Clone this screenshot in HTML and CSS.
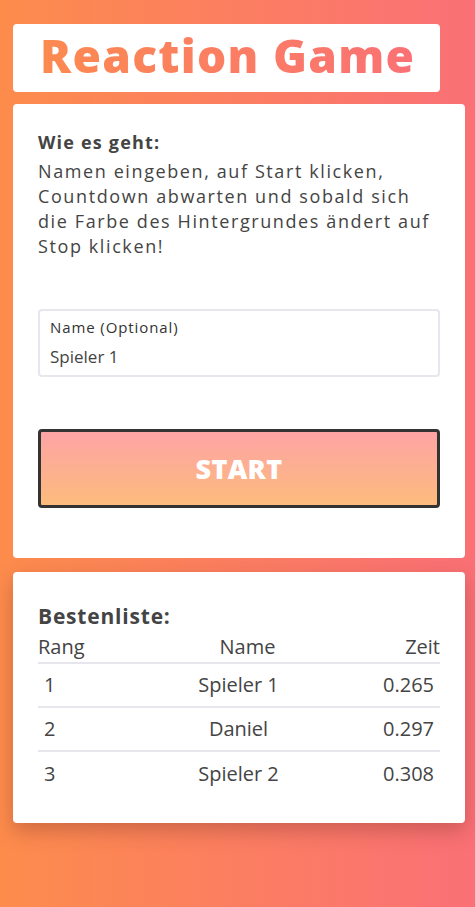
FILE: index.html
```html
<!DOCTYPE html>
<html lang="de">
<head>
<meta charset="utf-8">
<title>Reaction Game</title>
<link rel="stylesheet" href="styles.css">
</head>
<body>
<main class="page">
  <header class="title-box">
    <h1 class="title">Reaction Game</h1>
  </header>

  <section class="card game">
    <p class="how-title">Wie es geht:</p>
    <p class="how-text">Namen eingeben, auf Start klicken,<br>Countdown abwarten und sobald sich<br>die Farbe des Hintergrundes ändert auf<br>Stop klicken!</p>

    <label class="field">
      <span class="field-label">Name (Optional)</span>
      <span class="field-value">Spieler 1</span>
    </label>

    <button class="start-btn" type="button">START</button>
  </section>

  <section class="card board">
    <h2 class="board-title">Bestenliste:</h2>
    <table class="scores">
      <thead>
        <tr><th class="c-rank">Rang</th><th class="c-name">Name</th><th class="c-time">Zeit</th></tr>
      </thead>
      <tbody>
        <tr><td class="c-rank">1</td><td class="c-name">Spieler 1</td><td class="c-time">0.265</td></tr>
        <tr><td class="c-rank">2</td><td class="c-name">Daniel</td><td class="c-time">0.297</td></tr>
        <tr><td class="c-rank">3</td><td class="c-name">Spieler 2</td><td class="c-time">0.308</td></tr>
      </tbody>
    </table>
  </section>
</main>
</body>
</html>
```

FILE: styles.css
```css
* { box-sizing: border-box; }

html, body {
  margin: 0;
  height: 100%;
}

body {
  background: linear-gradient(to right, #fd8c4c, #fa7076);
  font-family: "Open Sans", "DejaVu Sans", sans-serif;
  color: #444;
}

.page {
  display: flex;
  flex-direction: column;
  align-items: flex-start;
  padding: 24px 10px 40px 13px;
}

.title-box {
  background: #fff;
  border-radius: 4px;
  height: 68px;
  padding: 0 25px 6px 27px;
  display: flex;
  align-items: center;
}

.title {
  margin: 0;
  font-size: 46px;
  font-weight: 800;
  letter-spacing: 1.3px;
  line-height: 1;
  background: linear-gradient(to right, #fc8a50, #fa7175);
  -webkit-background-clip: text;
  background-clip: text;
  color: transparent;
}

.card {
  align-self: stretch;
  background: #fff;
  border-radius: 4px;
  padding: 25px;
}

.game {
  margin-top: 12px;
  height: 454px;
  padding-top: 23px;
}

.how-title {
  margin: 0 0 2px;
  font-size: 18px;
  font-weight: 700;
  letter-spacing: 1.2px;
  line-height: 30px;
  color: #444;
}

.how-text {
  margin: 0;
  font-size: 18px;
  letter-spacing: 1.6px;
  line-height: 25px;
  color: #444;
  white-space: nowrap;
}

.field {
  display: flex;
  flex-direction: column;
  margin-top: 50px;
  height: 68px;
  border: 2px solid #e6e6ec;
  border-radius: 4px;
  padding: 6px 10px 0 10px;
}

.field-label {
  font-size: 15px;
  letter-spacing: 0.9px;
  line-height: 20px;
  color: #333;
}

.field-value {
  margin-top: 9px;
  font-size: 17px;
  line-height: 22px;
  color: #444;
}

.start-btn {
  display: block;
  width: 100%;
  height: 79px;
  margin-top: 52px;
  border: 3px solid #333;
  border-radius: 4px;
  background: linear-gradient(to bottom, #fda4a5, #fdbb7c);
  color: #fff;
  font-family: inherit;
  font-size: 27px;
  font-weight: 800;
  letter-spacing: 0.3px;
}

.board {
  margin-top: 14px;
  padding: 30px 25px 28px;
  box-shadow: 0 8px 20px rgba(120, 50, 40, 0.35);
}

.board-title {
  margin: 0;
  font-size: 21px;
  font-weight: 700;
  letter-spacing: 0.8px;
  line-height: 28px;
  color: #444;
}

.scores {
  width: 100%;
  border-collapse: collapse;
  margin-top: 4px;
  font-size: 20px;
  color: #444;
}

.scores th {
  font-weight: 400;
  padding: 0 0 2px;
  line-height: 26px;
  border-bottom: 2px solid #e6e6ec;
}

.scores td {
  padding: 0 6px;
  height: 44px;
  line-height: 26px;
}

.scores tbody tr + tr td {
  border-top: 2px solid #e6e6ec;
}

.c-rank { text-align: left; width: 110px; }
.c-name { text-align: center; }
.c-time { text-align: right; width: 93px; }
td.c-name { padding-right: 24px; }
```
